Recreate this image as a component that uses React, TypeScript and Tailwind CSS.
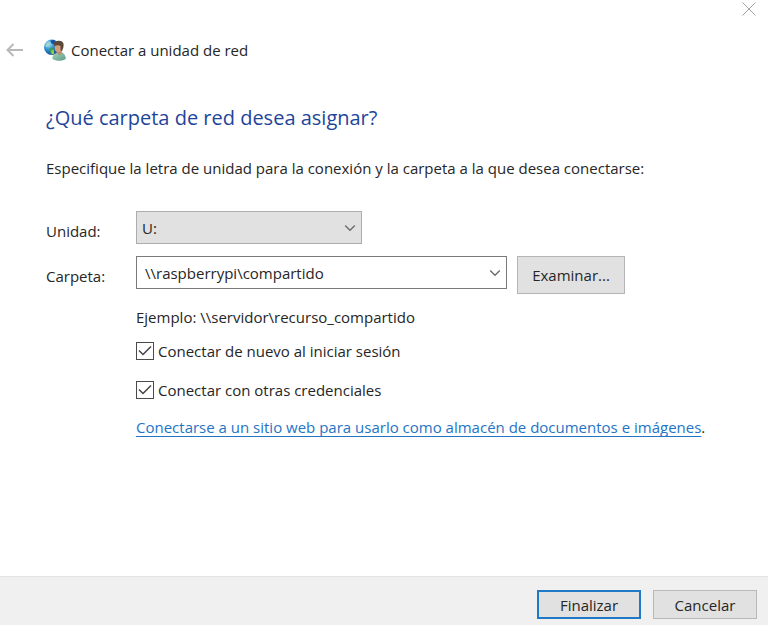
import { useState } from "react";

function GlobeUserIcon() {
  return (
    <svg width="22" height="22" viewBox="0 0 24 24" aria-hidden="true" className="shrink-0">
      <defs>
        <radialGradient id="globe" cx="0.3" cy="0.3" r="0.8">
          <stop offset="0" stopColor="#b4e6f8" />
          <stop offset="0.45" stopColor="#2c8fd0" />
          <stop offset="1" stopColor="#123f92" />
        </radialGradient>
        <linearGradient id="shirt" x1="0" y1="0" x2="1" y2="1">
          <stop offset="0" stopColor="#a5d3bd" />
          <stop offset="1" stopColor="#5d9d85" />
        </linearGradient>
      </defs>
      <circle cx="8.500" cy="9" r="8.500" fill="url(#globe)" />
      <path d="M7 1.500L11 1 13 4 11 6 8 4.500z" fill="#1c4f9c" />
      <path d="M2 6L5 3.500 6.500 5 4.500 8 2 9z" fill="#9bd8c8" />
      <path d="M6 10L9 9 11 12 11 16.500 8 17 6.500 14z" fill="#3f9f57" />
      <path d="M8 12.500L10.500 12 11 16 8.500 16.500z" fill="#93d64c" />
      <path d="M9 21.500C9 18.500 11 16 14 15L19.500 14.500C22.500 16 23.500 18.500 23.800 21.500 20 24.500 13 24.500 9 21.500z" fill="url(#shirt)" />
      <path d="M13.500 12L19 12 19.500 15 17 18 13.800 15z" fill="#c08b6b" />
      <ellipse cx="15.500" cy="9.500" rx="3.800" ry="4.800" fill="#d3a07e" />
      <path d="M11 7.500C10.500 4 13 2 16.500 2 20.800 2 22.300 5.500 21 9.500L19.500 13.500 18 12 18 7.500C16 6 13.500 7 11 7.500z" fill="#5e4838" />
    </svg>
  );
}

function Chevron({ className = "" }: { className?: string }) {
  return (
    <svg
      width="12"
      height="8"
      viewBox="0 0 12 8"
      fill="none"
      stroke="#6a6a6a"
      strokeWidth="1.3"
      aria-hidden="true"
      className={className}
    >
      <path d="M1.200 1.500L6 6.300 10.800 1.500" />
    </svg>
  );
}

function CheckOption({ label }: { label: string }) {
  const [checked, setChecked] = useState(true);
  return (
    <label className="flex h-6 w-fit items-center gap-1">
      <span className="grid size-[18px] shrink-0 place-items-center">
        <input
          type="checkbox"
          checked={checked}
          onChange={(e) => setChecked(e.target.checked)}
          className="col-start-1 row-start-1 size-[18px] appearance-none border border-[#4a4a4a] bg-white"
        />
        {checked && (
          <svg
            width="14"
            height="12"
            viewBox="0 0 14 12"
            fill="none"
            stroke="#444444"
            strokeWidth="1.5"
            aria-hidden="true"
            className="pointer-events-none col-start-1 row-start-1"
          >
            <path d="M1 5.500L5 9.500 13 1.500" />
          </svg>
        )}
      </span>
      {label}
    </label>
  );
}

export default function App() {
  const [folder, setFolder] = useState("\\\\raspberrypi\\compartido");

  return (
    <div className="flex min-h-screen flex-col bg-white font-['Open_Sans','Noto_Sans',sans-serif] text-[15px] leading-6 text-[#262626]">
      <div className="flex h-5 justify-end pt-0.5 pr-3">
        <button type="button" aria-label="Cerrar" className="flex size-[14px] items-center justify-center">
          <svg width="14" height="14" viewBox="0 0 14 14" stroke="#a3a3a3" strokeWidth="1" aria-hidden="true">
            <path d="M0.500 0.500L13.500 13.500M13.500 0.500L0.500 13.500" />
          </svg>
        </button>
      </div>

      <header className="mt-4 flex h-7 items-center pl-1.5">
        <button type="button" aria-label="Atrás" className="mr-5">
          <svg width="18" height="14" viewBox="0 0 18 14" fill="none" stroke="#b9b9b9" strokeWidth="2" aria-hidden="true">
            <path d="M17 7H1.500M7.500 1L1.500 7L7.500 13" />
          </svg>
        </button>
        <GlobeUserIcon />
        <span className="ml-[5px]">Conectar a unidad de red</span>
      </header>

      <main className="flex-1 px-[46px] pb-8">
        <h1 className="mt-10 text-[20px] leading-7 text-[#1f459a]">¿Qué carpeta de red desea asignar?</h1>
        <p className="mt-6">Especifique la letra de unidad para la conexión y la carpeta a la que desea conectarse:</p>

        <div className="mt-[31px] grid grid-cols-[90px_minmax(0,1fr)] gap-y-3">
          <label htmlFor="drive" className="pt-2">
            Unidad:
          </label>
          <div className="grid w-[226px] items-center">
            <select
              id="drive"
              defaultValue="U:"
              className="col-start-1 row-start-1 h-[33px] appearance-none rounded-none border border-[#adadad] bg-[#e1e1e1] px-[5px]"
            >
              <option>U:</option>
              <option>V:</option>
              <option>W:</option>
            </select>
            <Chevron className="pointer-events-none col-start-1 row-start-1 mr-1.5 justify-self-end" />
          </div>

          <label htmlFor="folder" className="pt-2">
            Carpeta:
          </label>
          <div className="flex items-start gap-[10px]">
            <div className="flex h-[33px] w-[371px] items-center border border-[#7a7a7a] bg-white pr-[5px]">
              <input
                id="folder"
                type="text"
                value={folder}
                onChange={(e) => setFolder(e.target.value)}
                className="min-w-0 flex-1 bg-transparent px-2 outline-none"
              />
              <button type="button" aria-label="Mostrar carpetas recientes">
                <Chevron />
              </button>
            </div>
            <button type="button" className="h-[38px] w-[108px] border border-[#b5b5b5] bg-[#e1e1e1]">
              Examinar...
            </button>
          </div>
        </div>

        <div className="ml-[90px]">
          <p className="mt-[11px]">Ejemplo: \\servidor\recurso_compartido</p>
          <div className="mt-[10px] flex flex-col gap-[15px]">
            <CheckOption label="Conectar de nuevo al iniciar sesión" />
            <CheckOption label="Conectar con otras credenciales" />
          </div>
          <p className="mt-[13px]">
            <a
              href="#sitio-web"
              className="text-[#2474c6] underline decoration-[#2474c6] decoration-1 underline-offset-3 [text-decoration-skip-ink:none]"
            >
              Conectarse a un sitio web para usarlo como almacén de documentos e imágenes
            </a>
            .
          </p>
        </div>
      </main>

      <footer className="flex justify-end gap-3 border-t border-[#e3e3e3] bg-[#f0f0f0] pt-[13px] pr-[11px] pb-1.5 pl-3">
        <button type="button" className="h-[29px] w-[104px] border-2 border-[#1f78c8] bg-[#e1e1e1] leading-5">
          Finalizar
        </button>
        <button type="button" className="h-[29px] w-[104px] border border-[#b8b8b8] bg-[#e1e1e1] leading-5">
          Cancelar
        </button>
      </footer>
    </div>
  );
}
